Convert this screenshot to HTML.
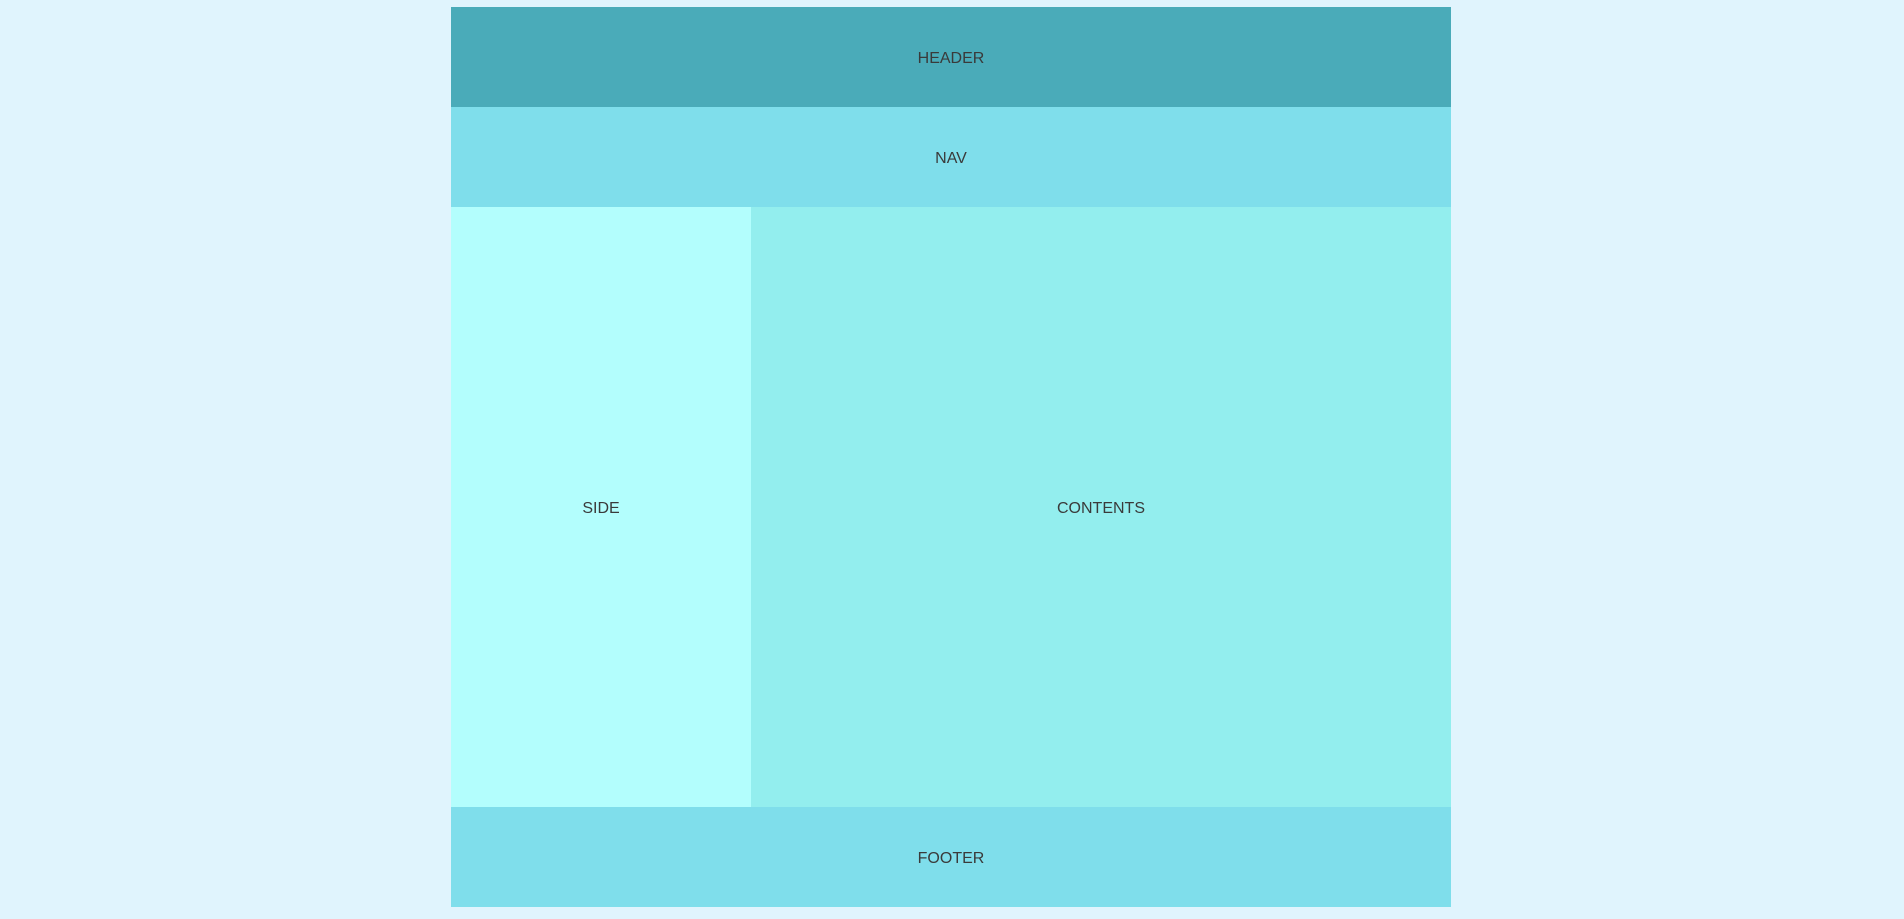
<!DOCTYPE html>
<html><head><style>
body{margin:0;background:#e0f4fd;width:1904px;height:919px;font-family:"Liberation Sans","NanumGothic",sans-serif;font-size:16px;color:#3a3a3a}
.w{position:absolute;left:451px;top:7px;width:1000px}
.b{display:flex;align-items:center;justify-content:center;box-sizing:border-box;padding-top:3px}
</style></head><body>
<div class="w">
<div class="b" style="height:100px;background:#4aabb9">HEADER</div>
<div class="b" style="height:100px;background:#7fdeeb">NAV</div>
<div style="display:flex;height:600px">
<div class="b" style="width:300px;background:#b3fefd">SIDE</div>
<div class="b" style="flex:1;background:#93eeee">CONTENTS</div>
</div>
<div class="b" style="height:100px;background:#7fdeeb">FOOTER</div>
</div>
</body></html>
